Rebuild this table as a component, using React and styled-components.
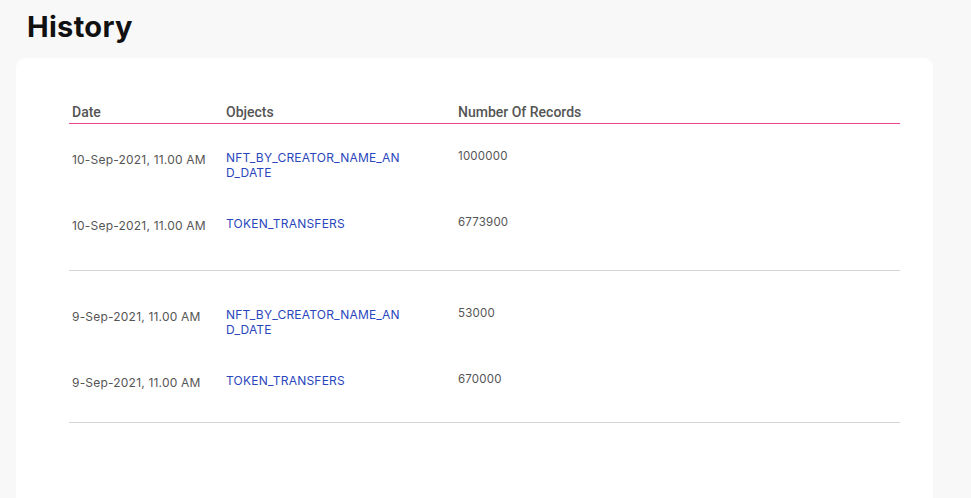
import React from 'react'
import styled, { createGlobalStyle } from 'styled-components'

const GlobalStyle = createGlobalStyle`
  html, body {
    margin: 0;
    padding: 0;
    background: #f8f8f8;
  }
  body {
    font-family: Inter, 'Liberation Sans', sans-serif;
  }
`

const Page = styled.div`
  padding: 0 38px 0 16px;
  min-height: 498px;
  box-sizing: border-box;
`

const Title = styled.h1`
  font-family: Inter, 'Liberation Sans', sans-serif;
  font-weight: 700;
  font-size: 29px;
  letter-spacing: 0.3px;
  color: #111;
  margin: 0;
  padding: 8px 0 0 11px;
  line-height: 38px;
  height: 50px;
`

const Card = styled.div`
  background: #fff;
  border-radius: 10px 10px 0 0;
  padding: 44px 33px 60px 53px;
  min-height: 440px;
  box-sizing: border-box;
`

const Grid = styled.div`
  display: grid;
  grid-template-columns: 154px 232px 1fr;
`

const HeadRow = styled(Grid)`
  border-bottom: 1px solid #ec4590;
  padding-bottom: 1px;
`

const HeadCell = styled.div`
  font-family: Roboto, 'Liberation Sans', sans-serif;
  font-weight: 500;
  font-size: 14px;
  line-height: 20px;
  color: #555;
  padding-left: 3px;
`

const Group = styled.div`
  display: flex;
  flex-direction: column;
  gap: ${({ $gap }) => $gap}px;
  padding: ${({ $top }) => $top}px 0 ${({ $bottom }) => $bottom}px;
  border-bottom: 1px solid #d3d3d3;
`

const Row = styled(Grid)`
  align-items: start;
`

const DateCell = styled.div`
  font-size: 12px;
  line-height: 15px;
  letter-spacing: 0.2px;
  color: #555;
  padding-left: 3px;
`

const ObjectCell = styled.div`
  font-size: 12px;
  line-height: 15px;
  letter-spacing: 0.2px;
  color: #2a46bd;
  padding-left: 3px;
  max-width: 178px;
  word-break: break-all;
  margin-top: -2px;
`

const NumberCell = styled.div`
  font-size: 11.5px;
  line-height: 15px;
  letter-spacing: 0.2px;
  color: #555;
  padding-left: 3px;
  margin-top: -3px;
`

const groups = [
  {
    top: 28,
    bottom: 37,
    gap: 38,
    rows: [
      { date: '10-Sep-2021, 11.00 AM', object: 'NFT_BY_CREATOR_NAME_AND_DATE', count: '1000000' },
      { date: '10-Sep-2021, 11.00 AM', object: 'TOKEN_TRANSFERS', count: '6773900' },
    ],
  },
  {
    top: 38,
    bottom: 32,
    gap: 38,
    rows: [
      { date: '9-Sep-2021, 11.00 AM', object: 'NFT_BY_CREATOR_NAME_AND_DATE', count: '53000' },
      { date: '9-Sep-2021, 11.00 AM', object: 'TOKEN_TRANSFERS', count: '670000' },
    ],
  },
]

export default function App() {
  return (
    <Page>
      <GlobalStyle />
      <Title>History</Title>
      <Card>
        <HeadRow>
          <HeadCell>Date</HeadCell>
          <HeadCell>Objects</HeadCell>
          <HeadCell>Number Of Records</HeadCell>
        </HeadRow>
        {groups.map((g, i) => (
          <Group key={i} $top={g.top} $bottom={g.bottom} $gap={g.gap}>
            {g.rows.map((r, j) => (
              <Row key={j}>
                <DateCell>{r.date}</DateCell>
                <ObjectCell>{r.object}</ObjectCell>
                <NumberCell>{r.count}</NumberCell>
              </Row>
            ))}
          </Group>
        ))}
      </Card>
    </Page>
  )
}
